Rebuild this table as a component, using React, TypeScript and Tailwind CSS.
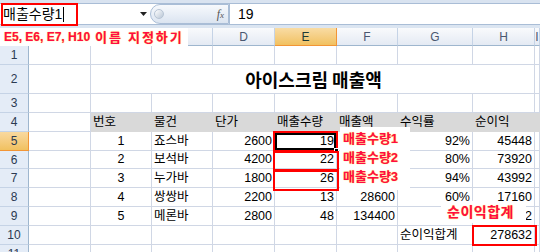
import React from "react";

const W = [
  "w-[29px]",
  "w-[62px]",
  "w-[61px]",
  "w-[61px]",
  "w-[62px]",
  "w-[62px]",
  "w-[61px]",
  "w-[75px]",
  "w-[62px]",
  "flex-1",
];

const GRID = "border-r border-b border-[#d0d7e5]";

function RowHead({ n, active }: { n: string; active?: boolean }) {
  return (
    <div
      className={`w-[29px] shrink-0 box-border flex items-center justify-center text-[12px] border-r border-b ${
        active
          ? "bg-gradient-to-b from-[#f9d99f] to-[#f1c15f] border-r-[#f29536] border-b-[#f29536] text-[#2b3a52]"
          : "bg-[#e4ecf7] border-r-[#9eb6ce] border-b-[#c5d3e6] text-[#2b3a52]"
      }`}
    >
      {n}
    </div>
  );
}

function Cell({
  i,
  children,
  align = "left",
  extra = "",
}: {
  i: number;
  children?: React.ReactNode;
  align?: "left" | "right" | "center";
  extra?: string;
}) {
  const a =
    align === "right" ? "justify-end" : align === "center" ? "justify-center" : "justify-start";
  return (
    <div
      className={`${W[i]} shrink-0 box-border flex items-end pb-[2px] leading-[14px] px-[2px] text-[12.5px] text-black whitespace-nowrap overflow-hidden ${a} ${extra || GRID}`}
    >
      {children}
    </div>
  );
}

const data = [
  ["1", "죠스바", "2600", "19", "49400", "92%", "45448"],
  ["2", "보석바", "4200", "22", "92400", "80%", "73920"],
  ["3", "누가바", "1800", "26", "46800", "94%", "43992"],
  ["4", "쌍쌍바", "2200", "13", "28600", "60%", "17160"],
  ["5", "메론바", "2800", "48", "134400", "73%", "98112"],
];

const rowH = ["h-[19px]", "h-[18px]", "h-[19px]", "h-[19px]", "h-[19px]"];

const labelCls =
  "font-bold text-[#ff0a46] [text-shadow:0_0_1px_#ffd400] font-['Liberation_Sans','Noto_Sans_CJK_KR',sans-serif] whitespace-nowrap";

export default function App() {
  return (
    <div className="w-[540px] h-[252px] overflow-hidden bg-white relative font-['Liberation_Sans','Noto_Sans_CJK_KR',sans-serif] text-black select-none">
      {/* Formula bar */}
      <div className="h-[28px] flex flex-col">
        <div className="h-[3px] bg-[#d9e3f0]" />
        <div className="h-[1px] bg-[#a9bdd6]" />
        <div className="h-[20px] flex bg-white">
          <div className="w-[150px] flex items-center relative">
            <span className="pl-[3px] text-[14px] leading-none">매출수량1</span>
            <span className="w-[1px] h-[15px] bg-black ml-[1px]" />
            <svg
              className="absolute left-[140px] top-[8px]"
              width="7"
              height="4"
              viewBox="0 0 7 4"
            >
              <path d="M0 0h7L3.5 4z" fill="#222" />
            </svg>
          </div>
          <div className="w-[79px] h-[20px] relative rounded-l-full border border-[#a9bdd6] bg-gradient-to-b from-[#f7f9fc] via-[#e9eff7] to-[#dbe4f0] flex items-center justify-end pr-[4px]">
            <div className="absolute left-[3px] top-[4px] w-[10px] h-[10px] rounded-full bg-gradient-to-br from-[#ffffff] to-[#b9c6d6] border border-[#b7c4d4]" />
            <span className="font-['Liberation_Serif',serif] italic text-[12px] text-[#555] leading-none">
              f<span className="text-[9px]">x</span>
            </span>
          </div>
          <div className="flex-1 flex items-center pl-[8px] text-[14px] leading-none border-l border-[#a9bdd6]">
            19
          </div>
        </div>
        <div className="h-[1px] bg-[#a9bdd6]" />
        <div className="h-[3px] bg-[#dbe5f1]" />
      </div>

      {/* Column headers */}
      <div className="flex h-[18px]">
        {["", "A", "B", "C", "D", "E", "F", "G", "H", "I"].map((c, i) => (
          <div
            key={i}
            className={`${W[i]} shrink-0 box-border flex items-center justify-center text-[12px] border-r border-b ${
              c === "E"
                ? "bg-gradient-to-b from-[#f9dca4] to-[#f1c15f] border-[#f29536] text-[#1f3a35]"
                : "bg-gradient-to-b from-[#f9fafc] to-[#e4eaf3] border-r-[#c5d3e6] border-b-[#9eb6ce] text-[#4a5870]"
            }`}
          >
            {c}
          </div>
        ))}
      </div>

      {/* Row 1 */}
      <div className="flex h-[19px]">
        <RowHead n="1" />
        {[1, 2, 3, 4, 5, 6, 7, 8, 9].map((i) => (
          <Cell key={i} i={i} />
        ))}
      </div>

      {/* Row 2 (title) */}
      <div className="flex h-[29px]">
        <RowHead n="2" />
        <Cell i={1} />
        <div className="w-[444px] shrink-0 box-border border-r border-b border-[#d0d7e5] flex items-center justify-center text-[18px] font-bold font-['Noto_Sans_CJK_KR',sans-serif] pl-[2px]">
          아이스크림 매출액
        </div>
        <Cell i={9} />
      </div>

      {/* Row 3 */}
      <div className="flex h-[19px]">
        <RowHead n="3" />
        {[1, 2, 3, 4, 5, 6, 7, 8, 9].map((i) => (
          <Cell key={i} i={i} />
        ))}
      </div>

      {/* Row 4 header */}
      <div className="flex h-[19px]">
        <RowHead n="4" />
        <Cell i={1} />
        {["번호", "물건", "단가", "매출수량", "매출액", "수익률", "순이익", ""].map((t, k) => (
          <Cell key={k} i={k + 2} extra="bg-[#d9d9d9] border-b border-[#d9d9d9]">
            {t}
          </Cell>
        ))}
      </div>

      {/* Data rows 5-9 */}
      {data.map((r, k) => (
        <div key={k} className={`flex ${rowH[k]}`}>
          <RowHead n={String(k + 5)} active={k === 0} />
          <Cell i={1} />
          <Cell i={2} align="center">
            {r[0]}
          </Cell>
          <Cell i={3}>{r[1]}</Cell>
          <Cell i={4} align="right">
            {r[2]}
          </Cell>
          <Cell i={5} align="right">
            {r[3]}
          </Cell>
          <Cell i={6} align="right">
            {r[4]}
          </Cell>
          <Cell i={7} align="right">
            {r[5]}
          </Cell>
          <Cell i={8} align="right">
            {r[6]}
          </Cell>
          <Cell i={9} />
        </div>
      ))}

      {/* Row 10 */}
      <div className="flex h-[19px]">
        <RowHead n="10" />
        {[1, 2, 3, 4, 5, 6].map((i) => (
          <Cell key={i} i={i} />
        ))}
        <Cell i={7}>순이익합계</Cell>
        <Cell i={8} align="right">
          278632
        </Cell>
        <Cell i={9} />
      </div>

      {/* Row 11 */}
      <div className="flex h-[19px]">
        <RowHead n="11" />
        {[1, 2, 3, 4, 5, 6, 7, 8, 9].map((i) => (
          <Cell key={i} i={i} />
        ))}
      </div>

      {/* Overlays */}
      <div className="absolute left-[1px] top-[3px] w-[77px] h-[23px] border-2 border-[#ff0000]" />

      <div
        className={`absolute left-0 top-[28px] w-[188px] h-[18px] bg-white flex items-center pl-[4px] text-[12px] ${labelCls}`}
      >
        <span className="shrink-0">E5, E6, E7, H10</span>
        <span className="shrink-0 ml-[5px] text-[13px] tracking-[2px] font-['Noto_Sans_CJK_KR',sans-serif]">
          이름 지정하기
        </span>
      </div>

      {/* selected E5 */}
      <div className="absolute left-[273px] top-[131px] w-[65px] h-[21px] border-2 border-[#ff0000]" />
      <div className="absolute left-[275px] top-[133px] w-[61px] h-[17px] border-2 border-black" />
      <div className="absolute left-[334px] top-[148px] w-[5px] h-[5px] bg-black border border-white" />
      <div className="absolute left-[273px] top-[151px] w-[66px] h-[20px] border-2 border-[#ff0000]" />
      <div className="absolute left-[273px] top-[170px] w-[66px] h-[21px] border-2 border-[#ff0000]" />
      <div className="absolute left-[472px] top-[225px] w-[65px] h-[21px] border-2 border-[#ff0000]" />

      <div
        className={`absolute left-[340px] top-[127px] w-[70px] h-[63px] bg-white flex flex-col pt-[4px] pl-[3px] text-[13px] ${labelCls}`}
      >
        <div className="h-[19px] leading-[15px]">매출수량1</div>
        <div className="h-[19px] leading-[15px]">매출수량2</div>
        <div className="h-[19px] leading-[15px]">매출수량3</div>
      </div>

      <div
        className={`absolute left-[441px] top-[201px] w-[85px] h-[22px] bg-white flex items-center pl-[6px] pt-[1px] text-[14px] tracking-[0.5px] ${labelCls}`}
      >
        순이익합계
      </div>
    </div>
  );
}
